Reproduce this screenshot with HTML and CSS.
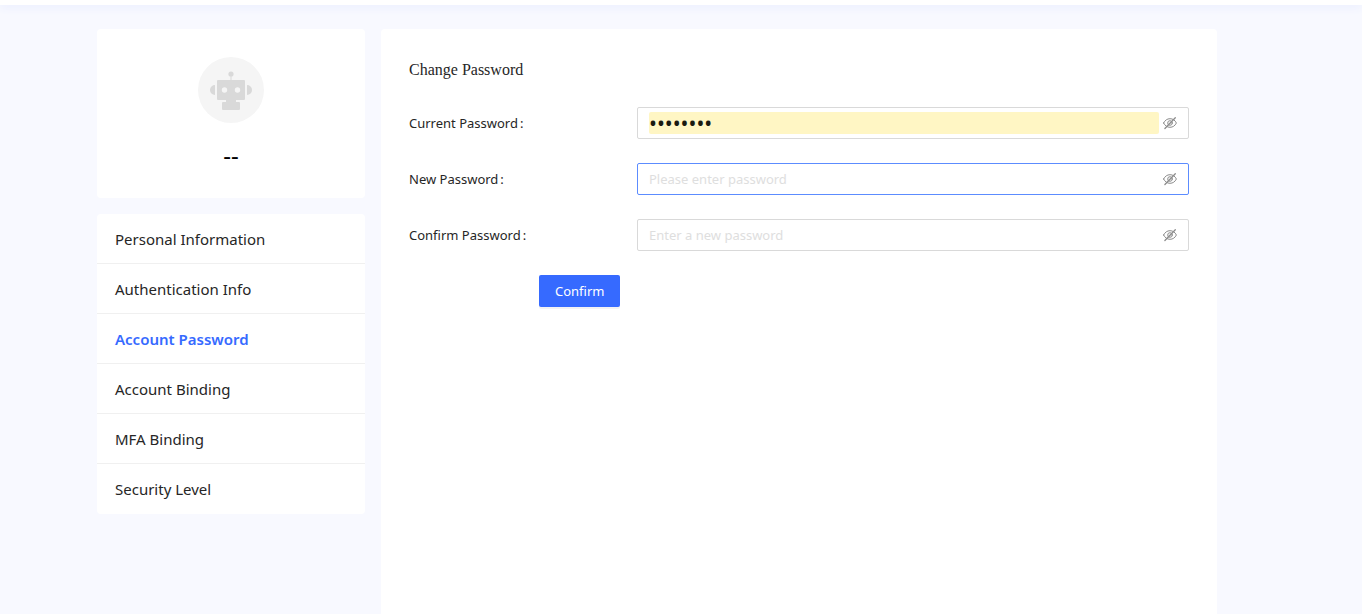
FILE: index.html
```html
<!DOCTYPE html>
<html lang="en">
<head>
<meta charset="utf-8">
<meta name="viewport" content="width=device-width, initial-scale=1">
<title>Account Password</title>
<link rel="stylesheet" href="styles.css">
</head>
<body>
<svg class="sprite" aria-hidden="true">
  <symbol id="eye-off" viewBox="0 0 14 14">
    <g fill="none" stroke="currentColor" stroke-linecap="round">
      <path d="M.6 7C2 4.200 4.200 2.700 7 2.700S12 4.200 13.400 7C12 9.800 9.800 11.300 7 11.300S2 9.800.6 7Z"/>
      <circle cx="7" cy="7" r="2.300"/>
      <path stroke-width="1.300" d="M1.900 12.500 12.300 1.700"/>
    </g>
  </symbol>
</svg>
<header class="topbar"></header>
<main class="page">
  <aside class="sidebar">
    <section class="card profile">
      <div class="avatar">
        <svg viewBox="0 0 66 66" aria-hidden="true">
          <g fill="#d9d9d9">
            <circle cx="33" cy="17" r="2.600"/>
            <path d="M32.500 18h1v6h-1z"/>
            <path fill-rule="evenodd" d="M20 23h26a1 1 0 0 1 1 1v18a1 1 0 0 1-1 1h-8v2h3a1 1 0 0 1 1 1v6a1 1 0 0 1-1 1H25a1 1 0 0 1-1-1v-6a1 1 0 0 1 1-1h3v-2h-8a1 1 0 0 1-1-1V24a1 1 0 0 1 1-1Zm6.500 7.300a2.700 2.700 0 1 0 0 5.400 2.700 2.700 0 0 0 0-5.400Zm13 0a2.700 2.700 0 1 0 0 5.400 2.700 2.700 0 0 0 0-5.400Z"/>
            <path d="M17 28v10a5 5 0 0 1 0-10ZM49 28v10a5 5 0 0 0 0-10Z"/>
          </g>
        </svg>
      </div>
      <p class="name">--</p>
    </section>
    <nav class="card menu">
      <a class="menu-item" href="#personal">Personal Information</a>
      <a class="menu-item" href="#authentication">Authentication Info</a>
      <a class="menu-item active" href="#password" aria-current="page">Account Password</a>
      <a class="menu-item" href="#binding">Account Binding</a>
      <a class="menu-item" href="#mfa">MFA Binding</a>
      <a class="menu-item" href="#security">Security Level</a>
    </nav>
  </aside>
  <section class="card content">
    <h1 class="title">Change Password</h1>
    <form class="form">
      <div class="row">
        <label class="label" for="current">Current Password</label>
        <div class="field">
          <input class="input filled" id="current" type="password" value="password">
          <button class="toggle" type="button" aria-label="Show current password"><svg><use href="#eye-off"/></svg></button>
        </div>
      </div>
      <div class="row">
        <label class="label" for="new">New Password</label>
        <div class="field focused">
          <input class="input" id="new" type="password" placeholder="Please enter password">
          <button class="toggle" type="button" aria-label="Show new password"><svg><use href="#eye-off"/></svg></button>
        </div>
      </div>
      <div class="row">
        <label class="label" for="confirm">Confirm Password</label>
        <div class="field">
          <input class="input" id="confirm" type="password" placeholder="Enter a new password">
          <button class="toggle" type="button" aria-label="Show confirmed password"><svg><use href="#eye-off"/></svg></button>
        </div>
      </div>
      <button class="submit" type="submit">Confirm</button>
    </form>
  </section>
</main>
</body>
</html>
```
FILE: styles.css
```css
* { box-sizing: border-box; }
body {
  margin: 0;
  min-height: 100vh;
  display: flex;
  flex-direction: column;
  background: #f8f9ff;
  color: #262626;
  font-family: "Segoe UI", "Noto Sans", sans-serif;
  font-size: 13px;
}
.sprite { position: absolute; width: 0; height: 0; }
.topbar {
  height: 5px;
  background: #fff;
  box-shadow: 0 2px 8px #e6ebff;
}
.page {
  flex: 1;
  display: flex;
  gap: 16px;
  width: 100%;
  max-width: 1216px;
  margin: 0 auto;
  padding: 24px 72px 0 24px;
}
.card { background: #fff; border-radius: 4px; }
.sidebar {
  flex: 0 0 268px;
  display: flex;
  flex-direction: column;
  gap: 16px;
}
.profile {
  display: flex;
  flex-direction: column;
  align-items: center;
  gap: 16px;
  padding: 28px 16px;
}
.avatar {
  width: 66px;
  height: 66px;
  border-radius: 50%;
  background: #f5f5f5;
}
.avatar svg { display: block; }
.name {
  margin: 0;
  color: #000;
  font-size: 24px;
  line-height: 31px;
}
.menu { display: flex; flex-direction: column; }
.menu-item {
  padding: 13px 18px 12px;
  border-bottom: 1px solid #f0f0f0;
  color: #262626;
  font-size: 15px;
  line-height: 24px;
  text-decoration: none;
}
.menu-item:last-child { border-bottom: 0; padding-bottom: 13px; }
.menu-item.active { color: #366aff; font-weight: 600; }
.content {
  flex: 1;
  min-width: 0;
  padding: 28px;
  border-radius: 4px 4px 0 0;
}
.title {
  margin: 0 0 24px;
  font-family: "Liberation Serif", serif;
  font-size: 16px;
  font-weight: 400;
  line-height: 26px;
}
.form {
  display: flex;
  flex-direction: column;
  align-items: flex-start;
  gap: 24px;
}
.row {
  display: grid;
  grid-template-columns: 228px 1fr;
  align-items: center;
  width: 100%;
}
.label::after { content: ":"; margin-left: 2px; }
.field {
  display: flex;
  align-items: center;
  gap: 4px;
  height: 32px;
  padding: 0 11px;
  border: 1px solid #d9d9d9;
  border-radius: 2px;
}
.focused { border-color: #5c8cff; }
.input {
  flex: 1;
  min-width: 0;
  height: 22px;
  padding: 0;
  border: 0;
  outline: 0;
  border-radius: 2px;
  background: transparent;
  color: #1a1a10;
  font: inherit;
}
.input::placeholder { color: #dedede; }
.filled { background: #fff6c4; font-size: 21px; }
.toggle {
  width: 14px;
  height: 14px;
  padding: 0;
  border: 0;
  background: none;
  color: #8c8c8c;
}
.toggle svg { display: block; width: 14px; height: 14px; }
.submit {
  height: 32px;
  margin-left: 130px;
  padding: 0 16px;
  border: 0;
  border-radius: 2px;
  background: #366aff;
  box-shadow: 0 2px 0 #f2f2f4;
  color: #fff;
  font: inherit;
}
```
